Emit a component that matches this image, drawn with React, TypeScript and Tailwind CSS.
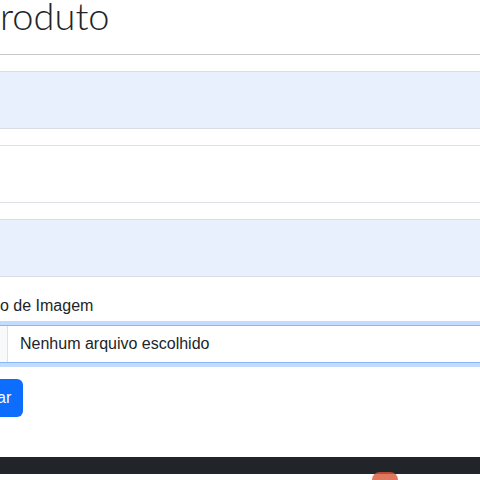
export default function App() {
  return (
    <div className="relative h-[480px] w-[480px] overflow-hidden bg-white font-['Liberation_Sans',Arial,sans-serif] text-[#212529]">
      <h1 className="font-['Lato',sans-serif] text-[38px] font-light leading-[30px]">roduto</h1>
      <hr className="mt-[24px] border-t border-[#c8c9ca]" />

      <div className="-mx-2 mt-4 flex flex-col gap-4">
        <div className="h-[58px] rounded-md border border-[#dadde1] bg-[#e8f0fe]" />
        <div className="h-[58px] rounded-md border border-[#dee2e6] bg-white" />
        <div className="h-[58px] rounded-md border border-[#dadde1] bg-[#e8f0fe]" />
      </div>

      <label className="mt-[17px] block text-base leading-6">o de Imagem</label>
      <div className="-ml-[80px] -mr-2 mt-[7px] flex h-[38px] items-center rounded-md border border-[#86b7fe] bg-white shadow-[0_0_0_4px_rgba(13,110,253,0.25)]">
        <div className="h-full w-[87px] border-r border-[#dee2e6] bg-[#f8f9fa]" />
        <span className="pl-3 text-base">Nenhum arquivo escolhido</span>
      </div>

      <div className="mt-4 flex">
        <button className="-ml-[60px] flex h-[38px] items-center rounded-md bg-[#0d6efd] pl-[57px] pr-3 text-base font-medium text-white">
          ar
        </button>
      </div>

      <footer className="mt-[40px] h-[17px] bg-[#212529]" />
      <div className="absolute left-[372px] top-[472px] h-[16px] w-[26px] rounded-full bg-[#d9583a] opacity-80" />
    </div>
  )
}
